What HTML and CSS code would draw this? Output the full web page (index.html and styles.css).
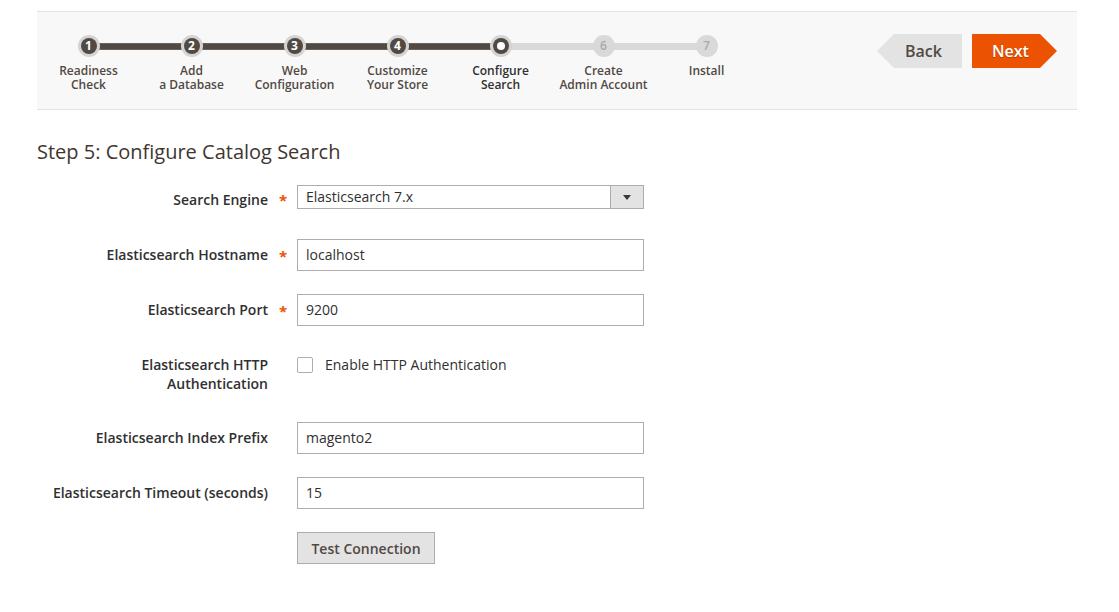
FILE: index.html
```html
<!DOCTYPE html>
<html>
<head>
<meta charset="utf-8">
<link rel="stylesheet" href="styles.css">
</head>
<body>
<div class="page">
  <div class="nav">
    <div class="steps">
      <div class="track"><div class="track-done"></div></div>
      <div class="step done"><span class="dot">1</span><span class="lbl"><span>Readiness</span><span>Check</span></span></div>
      <div class="step done"><span class="dot">2</span><span class="lbl"><span>Add</span><span>a Database</span></span></div>
      <div class="step done"><span class="dot">3</span><span class="lbl"><span>Web</span><span>Configuration</span></span></div>
      <div class="step done"><span class="dot">4</span><span class="lbl"><span>Customize</span><span>Your Store</span></span></div>
      <div class="step active"><span class="dot"><i></i></span><span class="lbl"><span>Configure</span><span>Search</span></span></div>
      <div class="step todo"><span class="dot">6</span><span class="lbl"><span>Create</span><span>Admin Account</span></span></div>
      <div class="step todo"><span class="dot">7</span><span class="lbl"><span>Install</span></span></div>
    </div>
    <div class="actions">
      <button class="btn-back">Back</button>
      <button class="btn-next">Next</button>
    </div>
  </div>

  <h1 class="title">Step 5: Configure Catalog Search</h1>

  <div class="form">
    <div class="row r-select">
      <label class="label">Search Engine</label><span class="req">*</span>
      <div class="select"><span class="sel-text">Elasticsearch 7.x</span><span class="sel-arrow"></span></div>
    </div>
    <div class="row r-host">
      <label class="label">Elasticsearch Hostname</label><span class="req">*</span>
      <div class="input">localhost</div>
    </div>
    <div class="row r-port">
      <label class="label">Elasticsearch Port</label><span class="req">*</span>
      <div class="input">9200</div>
    </div>
    <div class="row r-auth">
      <label class="label">Elasticsearch HTTP<br>Authentication</label><span class="req"></span>
      <div class="check"><span class="box"></span><span class="check-lbl">Enable HTTP Authentication</span></div>
    </div>
    <div class="row r-prefix">
      <label class="label">Elasticsearch Index Prefix</label><span class="req"></span>
      <div class="input">magento2</div>
    </div>
    <div class="row r-timeout">
      <label class="label">Elasticsearch Timeout (seconds)</label><span class="req"></span>
      <div class="input">15</div>
    </div>
    <div class="row r-btn">
      <span class="label"></span><span class="req"></span>
      <button class="btn-test">Test Connection</button>
    </div>
  </div>
</div>
</body>
</html>
```

FILE: styles.css
```css
* { box-sizing: border-box; }
body {
  margin: 0;
  background: #fff;
  font-family: "Open Sans", "DejaVu Sans", sans-serif;
  color: #303030;
}
.page { padding: 11px 42px 0 37px; }

.nav {
  background: #f8f8f8;
  border-top: 1px solid #e3e3e3;
  border-bottom: 1px solid #e3e3e3;
  height: 99px;
  display: flex;
  justify-content: space-between;
}
.steps {
  position: relative;
  display: flex;
  padding-top: 23px;
}
.track {
  position: absolute;
  left: 52px;
  top: 31px;
  width: 617px;
  height: 7px;
  background: #d9d9d9;
}
.track-done {
  width: 411px;
  height: 100%;
  background: #514943;
  border-top: 1px solid #6b625c;
  border-bottom: 1px solid #6b625c;
}
.step {
  position: relative;
  width: 103px;
  display: flex;
  flex-direction: column;
  align-items: center;
}
.dot {
  width: 22px;
  height: 22px;
  border-radius: 50%;
  display: flex;
  align-items: center;
  justify-content: center;
  font-size: 12px;
  font-weight: 700;
  line-height: 1;
}
.step.done .dot, .step.active .dot {
  background: #514943;
  color: #fff;
  box-shadow: 0 0 0 3px #d6d4d2;
  width: 16px;
  height: 16px;
  margin: 3px 0;
}
.step.active .dot i {
  width: 8px;
  height: 8px;
  border-radius: 50%;
  background: #fff;
}
.step.todo .dot {
  background: #d9d9d9;
  color: #a9a9a9;
  font-weight: 600;
}
.lbl {
  margin-top: 7px;
  display: flex;
  flex-direction: column;
  align-items: center;
  font-size: 12px;
  font-weight: 600;
  color: #514943;
  white-space: nowrap;
}
.lbl span {
  display: block;
  height: 14px;
  line-height: 14px;
}
.step.active .lbl { color: #303030; }

.actions {
  display: flex;
  gap: 10px;
  padding-top: 22px;
  margin-right: 20px;
}
.actions button {
  height: 34px;
  width: 85px;
  border: 0;
  font-family: inherit;
  font-size: 16px;
  font-weight: 600;
  padding: 0;
}
.btn-back {
  background: #e3e3e3;
  color: #514943;
  clip-path: polygon(17px 0, 100% 0, 100% 100%, 17px 100%, 0 50%);
  padding-left: 8px !important;
}
.btn-next {
  background: #eb5202;
  color: #fff;
  clip-path: polygon(0 0, calc(100% - 17px) 0, 100% 50%, calc(100% - 17px) 100%, 0 100%);
  padding-right: 8px !important;
  text-shadow: 0 1px 1px rgba(0,0,0,0.25);
}

.title {
  margin: 29px 0 0;
  font-size: 20px;
  font-weight: 400;
  line-height: 26px;
  color: #41362f;
}

.form { margin-top: 20px; }
.row {
  display: flex;
  align-items: flex-start;
}
.label {
  width: 231px;
  text-align: right;
  font-size: 14px;
  font-weight: 600;
  line-height: 19px;
  color: #303030;
  padding-top: 6px;
}
.req {
  width: 29px;
  text-align: center;
  color: #eb5202;
  font-size: 15px;
  font-weight: 700;
  padding-top: 7px;
  padding-left: 1px;
}
.r-select .label { padding-top: 5px; }
.r-select .req { padding-top: 5px; }
.select {
  width: 347px;
  height: 24px;
  border: 1px solid #adadad;
  display: flex;
  justify-content: space-between;
  font-size: 14px;
  line-height: 22px;
}
.sel-text { padding-left: 8px; }
.sel-arrow {
  width: 33px;
  background: #e3e3e3;
  border-left: 1px solid #adadad;
  position: relative;
}
.sel-arrow::after {
  content: "";
  position: absolute;
  left: 12px;
  top: 9px;
  border-left: 4px solid transparent;
  border-right: 4px solid transparent;
  border-top: 5px solid #41362f;
}
.input {
  width: 347px;
  height: 32px;
  border: 1px solid #adadad;
  font-size: 14px;
  line-height: 30px;
  padding-left: 8px;
}
.r-select { margin-bottom: 29px; }
.r-host { margin-bottom: 23px; }
.r-port { margin-bottom: 29px; }
.r-auth { margin-bottom: 29px; }
.r-auth .label { padding-top: 0; }
.r-prefix { margin-bottom: 23px; }
.r-timeout { margin-bottom: 23px; }
.check {
  display: flex;
  align-items: center;
  height: 19px;
  font-size: 14px;
}
.box {
  width: 16px;
  height: 16px;
  border: 1px solid #adadad;
  border-radius: 2px;
  background: #fff;
  margin-right: 12px;
}
.btn-test {
  width: 138px;
  height: 32px;
  background: #e3e3e3;
  border: 1px solid #adadad;
  font-family: inherit;
  font-size: 14px;
  font-weight: 600;
  color: #514943;
  padding: 0;
}
```
